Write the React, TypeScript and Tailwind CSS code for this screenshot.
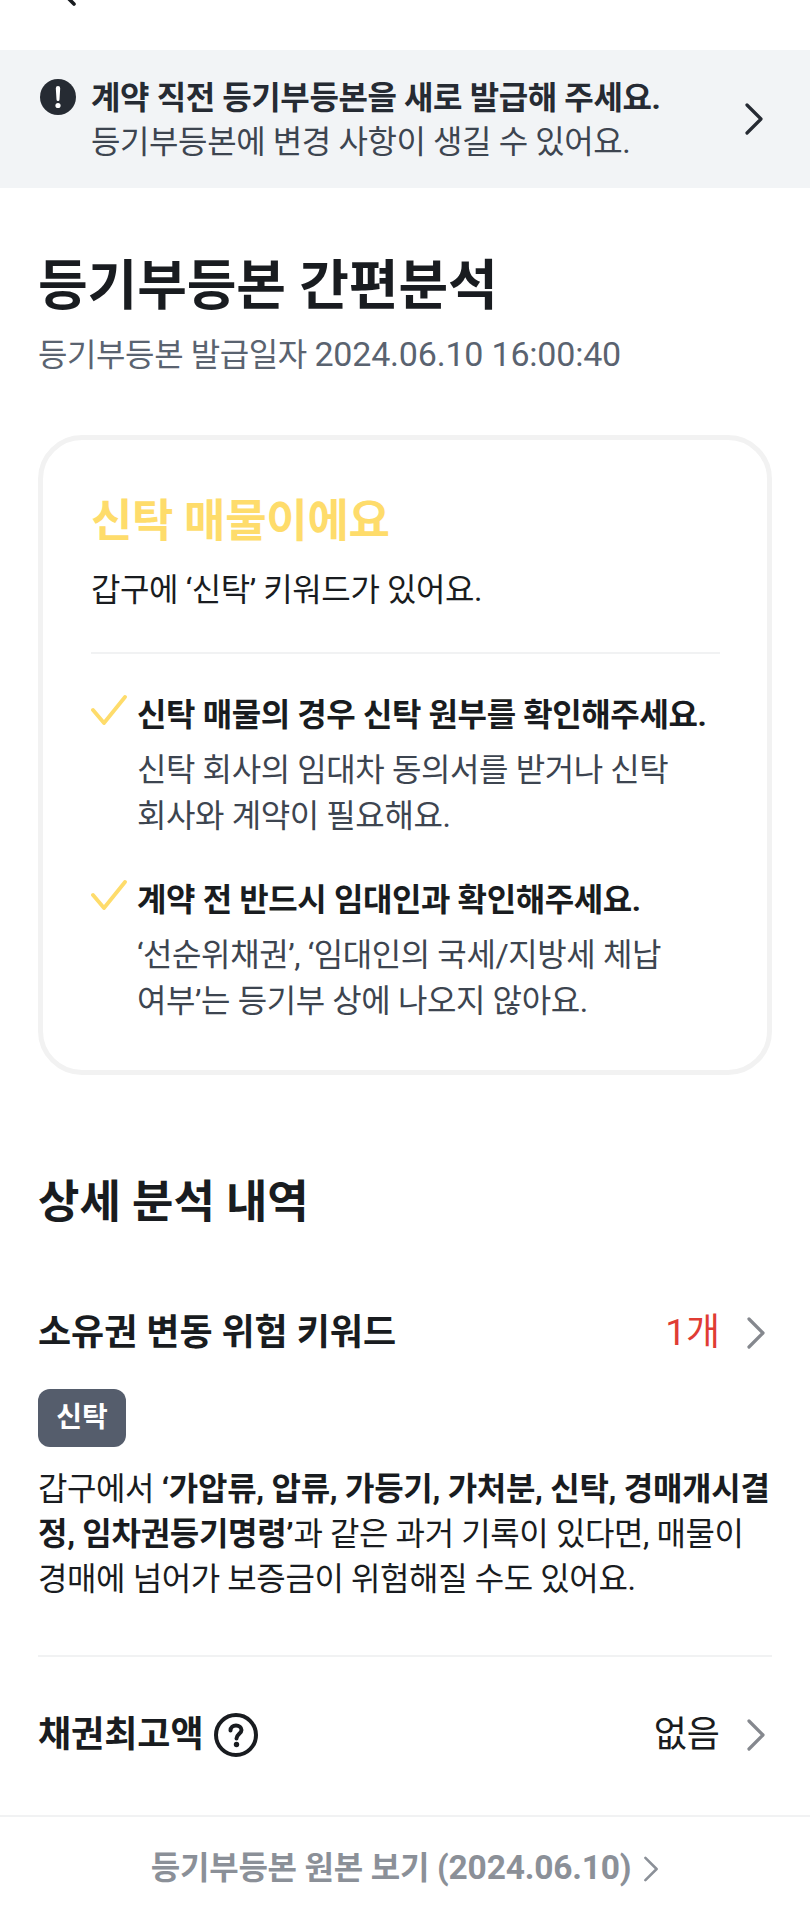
import React from "react";

const font = "font-['Roboto','Noto_Sans_CJK_KR',sans-serif]";

function Chevron({ className = "" }: { className?: string }) {
  return (
    <svg viewBox="0 0 20 32" className={className} fill="none" stroke="currentColor" strokeWidth="3.2" strokeLinecap="round" strokeLinejoin="round">
      <path d="M3 2 L17 16 L3 30" />
    </svg>
  );
}

function Check() {
  return (
    <svg viewBox="0 0 36 30" className="w-[36px] h-[30px] shrink-0 mt-[2px]" fill="none" stroke="#fedc6b" strokeWidth="3.8" strokeLinecap="round" strokeLinejoin="round">
      <path d="M2 15 L13 28 L34 2" />
    </svg>
  );
}

export default function App() {
  return (
    <div className={`${font} w-[810px] h-[1920px] bg-white overflow-hidden flex flex-col text-[#191c20]`}>
      <div className="h-[50px] shrink-0 overflow-hidden pl-[64px]">
        <svg viewBox="0 0 14 8" className="w-[14px] h-[8px]" fill="none" stroke="#191c20" strokeWidth="3.6" strokeLinecap="round">
          <path d="M3 -3 L10 4" />
        </svg>
      </div>

      <div className="h-[138px] shrink-0 bg-[#f2f4f6] flex items-center pl-[40px] pr-[46px]">
        <svg viewBox="0 0 36 36" className="w-[36px] h-[36px] shrink-0 self-start mt-[29px]">
          <circle cx="18" cy="18" r="18" fill="#262b33" />
          <path d="M15.8 9.2 a2.2 2.2 0 0 1 4.4 0 L19.5 20.5 a1.5 1.5 0 0 1 -3 0 Z" fill="#fff" />
          <circle cx="18" cy="26.5" r="2.6" fill="#fff" />
        </svg>
        <div className="ml-[15px] flex-1 text-[32px] leading-[45px] tracking-[-0.4px] whitespace-nowrap pt-[1px]">
          <div className="font-bold text-[#262b33] relative top-[1px]">계약 직전 등기부등본을 새로 발급해 주세요.</div>
          <div className="text-[#3d4550]">등기부등본에 변경 사항이 생길 수 있어요.</div>
        </div>
        <Chevron className="w-[20px] h-[32px] text-[#262b33]" />
      </div>

      <div className="px-[38px] pt-[66px]">
        <h1 className="text-[54px] leading-[66px] font-bold tracking-[-0.1px]">등기부등본 간편분석</h1>
        <p className="mt-[12px] text-[32px] leading-[44px] tracking-[-0.4px] text-[#5a6370]">등기부등본 발급일자 <span className="text-[34px] tracking-[-0.2px]">2024.06.10 16:00:40</span></p>

        <div className="mt-[58px] border-[5px] border-[#f2f2f2] rounded-[44px] pt-[52px] pl-[48px] pr-[47px] h-[640px]">
          <div className="text-[45px] leading-[60px] font-bold tracking-[-0.3px] text-[#fedc6b]">신탁 매물이에요</div>
          <div className="mt-[16px] text-[32px] leading-[44px] tracking-[-0.4px]">갑구에 ‘신탁’ 키워드가 있어요.</div>
          <div className="mt-[40px] h-[2px] bg-[#f1f2f3]" />
          <div className="mt-[39px] flex gap-[10px] items-start">
            <Check />
            <div className="min-w-0 whitespace-nowrap tracking-[-0.4px]">
              <div className="text-[32px] leading-[44px] font-bold">신탁 매물의 경우 신탁 원부를 확인해주세요.</div>
              <div className="mt-[10px] text-[32px] leading-[46px] text-[#3d4550]">신탁 회사의 임대차 동의서를 받거나 신탁<br />회사와 계약이 필요해요.</div>
            </div>
          </div>
          <div className="mt-[39px] flex gap-[10px] items-start">
            <Check />
            <div className="min-w-0 whitespace-nowrap tracking-[-0.4px]">
              <div className="text-[32px] leading-[44px] font-bold">계약 전 반드시 임대인과 확인해주세요.</div>
              <div className="mt-[10px] text-[32px] leading-[46px] text-[#3d4550]">‘선순위채권’, ‘임대인의 국세/지방세 체납<br />여부’는 등기부 상에 나오지 않아요.</div>
            </div>
          </div>
        </div>

        <h2 className="mt-[97px] text-[45px] leading-[62px] font-bold">상세 분석 내역</h2>

        <div className="mt-[69px] flex items-center h-[60px]">
          <span className="flex-1 text-[36px] font-bold">소유권 변동 위험 키워드</span>
          <span className="text-[37px] text-[#e03c34]">1개</span>
          <Chevron className="ml-[26px] mr-[6px] w-[20px] h-[32px] text-[#85888e]" />
        </div>
        <div className="mt-[26px] w-[88px] h-[58px] rounded-[12px] bg-[#555d6c] text-white text-[28px] font-bold flex items-center justify-center">신탁</div>
        <p className="mt-[20px] text-[32px] leading-[45px] tracking-[-0.4px] whitespace-nowrap">
          갑구에서 <b className="tracking-[-0.3px]">‘가압류, 압류, 가등기, 가처분, 신탁, 경매개시결<br />정, 임차권등기명령’</b>과 같은 과거 기록이 있다면, 매물이<br />경매에 넘어가 보증금이 위험해질 수도 있어요.
        </p>
        <div className="mt-[53px] h-[2px] bg-[#f1f2f3]" />
        <div className="mt-[48px] flex items-center h-[60px]">
          <span className="text-[36px] font-bold">채권최고액</span>
          <svg viewBox="0 0 44 44" className="ml-[10px] w-[44px] h-[44px]" fill="none">
            <circle cx="22" cy="22" r="20" stroke="#191c20" strokeWidth="4" />
            <path d="M16.5 17.5 C16.5 14 19 12.5 22 12.5 C25 12.5 27.5 14.3 27.5 17 C27.5 20.5 22.5 21 22.5 25.5" stroke="#191c20" strokeWidth="4" strokeLinecap="round" />
            <circle cx="22.5" cy="31.5" r="2.7" fill="#191c20" />
          </svg>
          <span className="ml-auto text-[36px]">없음</span>
          <Chevron className="ml-[26px] mr-[6px] w-[20px] h-[32px] text-[#85888e]" />
        </div>
      </div>

      <div className="mt-auto h-[105px] border-t-2 border-[#f1f2f3] flex items-center justify-center gap-[12px] text-[#8b9098]">
        <span className="text-[32px] font-bold tracking-[-0.2px]">등기부등본 원본 보기 <span className="text-[33.5px]">(2024.06.10)</span></span>
        <Chevron className="w-[16px] h-[26px]" />
      </div>
    </div>
  );
}
